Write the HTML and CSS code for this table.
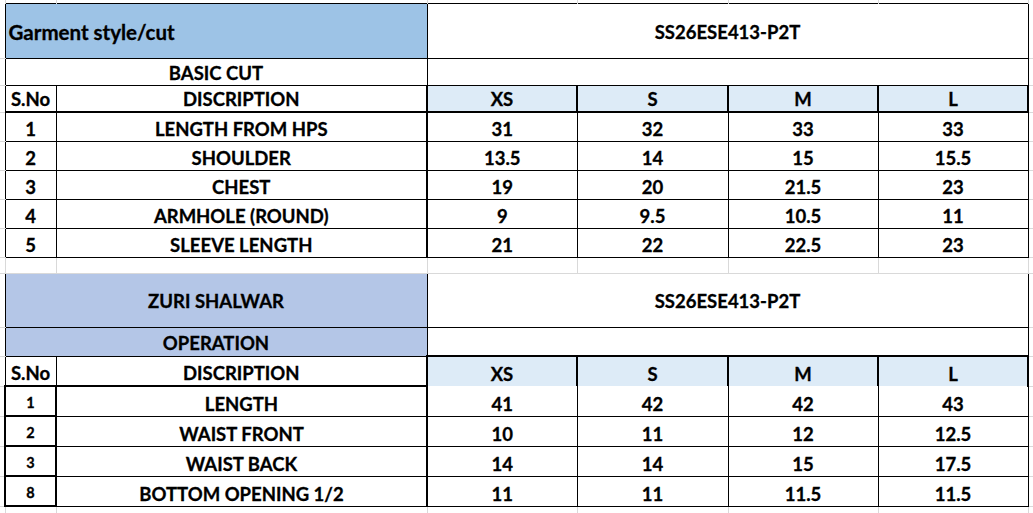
FILE: index.html
```html
<!DOCTYPE html>
<html>
<head>
<meta charset="utf-8">
<title>Size chart</title>
<link rel="stylesheet" href="styles.css">
</head>
<body>
<table class="sheet">
  <colgroup>
    <col class="w0"><col class="w1"><col class="w2"><col class="w3"><col class="w4"><col class="w5"><col class="w6"><col class="w7">
  </colgroup>
  <tbody>
    <tr class="h3">
      <td class="g gr"></td><td class="g gr"></td><td class="g gr"></td><td class="g gr"></td><td class="g gr"></td><td class="g gr"></td><td class="g gr"></td><td class="g gr"></td>
    </tr>
    <tr class="h55">
      <td class="g gb"></td>
      <td colspan="2" class="title blue1">Garment style/cut</td>
      <td colspan="4" class="mid">SS26ESE413-P2T</td>
      <td class="g gb gr"></td>
    </tr>
    <tr class="h27">
      <td class="g gb"></td>
      <td colspan="2">BASIC CUT</td>
      <td colspan="4"></td>
      <td class="g gb gr"></td>
    </tr>
    <tr class="h27">
      <td class="g gb"></td>
      <td class="bb">S.No</td>
      <td class="bb">DISCRIPTION</td>
      <td class="hd">XS</td>
      <td class="hd">S</td>
      <td class="hd">M</td>
      <td class="hd">L</td>
      <td class="g gb gr"></td>
    </tr>
    <tr class="h29">
      <td class="g gb"></td><td>1</td><td class="desc">LENGTH FROM HPS</td><td>31</td><td>32</td><td>33</td><td>33</td><td class="g gb gr"></td>
    </tr>
    <tr class="h29">
      <td class="g gb"></td><td>2</td><td class="desc">SHOULDER</td><td>13.5</td><td>14</td><td>15</td><td>15.5</td><td class="g gb gr"></td>
    </tr>
    <tr class="h29">
      <td class="g gb"></td><td>3</td><td class="desc">CHEST</td><td>19</td><td>20</td><td>21.5</td><td>23</td><td class="g gb gr"></td>
    </tr>
    <tr class="h29">
      <td class="g gb"></td><td>4</td><td class="desc">ARMHOLE (ROUND)</td><td>9</td><td>9.5</td><td>10.5</td><td>11</td><td class="g gb gr"></td>
    </tr>
    <tr class="h29">
      <td class="g gb"></td><td>5</td><td class="desc">SLEEVE LENGTH</td><td>21</td><td>22</td><td>22.5</td><td>23</td><td class="g gb gr"></td>
    </tr>
    <tr class="h16">
      <td class="g gr gb"></td><td class="g gr gb"></td><td class="g gr gb"></td><td class="g gr gb"></td><td class="g gr gb"></td><td class="g gr gb"></td><td class="g gr gb"></td><td class="g gr gb"></td>
    </tr>
    <tr class="h54">
      <td class="g gb"></td>
      <td colspan="2" class="mid blue2">ZURI SHALWAR</td>
      <td colspan="4" class="mid">SS26ESE413-P2T</td>
      <td class="g gb gr"></td>
    </tr>
    <tr class="h29">
      <td class="g gb"></td>
      <td colspan="2" class="blue2 up">OPERATION</td>
      <td colspan="4"></td>
      <td class="g gb gr"></td>
    </tr>
    <tr class="h30">
      <td class="g gb"></td>
      <td class="bb">S.No</td>
      <td class="bb">DISCRIPTION</td>
      <td class="hd hd2">XS</td>
      <td class="hd hd2">S</td>
      <td class="hd hd2">M</td>
      <td class="hd hd2">L</td>
      <td class="g gb gr"></td>
    </tr>
    <tr class="h30">
      <td class="g gb"></td><td class="sn">1</td><td class="desc">LENGTH</td><td class="nt">41</td><td class="nt">42</td><td class="nt">42</td><td class="nt">43</td><td class="g gb gr"></td>
    </tr>
    <tr class="h30">
      <td class="g gb"></td><td class="sn">2</td><td class="desc">WAIST FRONT</td><td>10</td><td>11</td><td>12</td><td>12.5</td><td class="g gb gr"></td>
    </tr>
    <tr class="h30">
      <td class="g gb"></td><td class="sn">3</td><td class="desc">WAIST BACK</td><td>14</td><td>14</td><td>15</td><td>17.5</td><td class="g gb gr"></td>
    </tr>
    <tr class="h30">
      <td class="g gb"></td><td class="sn">8</td><td class="desc">BOTTOM OPENING 1/2</td><td>11</td><td>11</td><td>11.5</td><td>11.5</td><td class="g gb gr"></td>
    </tr>
    <tr class="h7">
      <td class="g gr"></td><td class="g gr"></td><td class="g gr"></td><td class="g gr"></td><td class="g gr"></td><td class="g gr"></td><td class="g gr"></td><td class="g gr"></td>
    </tr>
  </tbody>
</table>
</body>
</html>
```

FILE: styles.css
```css
html, body {
  margin: 0;
  padding: 0;
  background: #ffffff;
}

.sheet {
  border-collapse: collapse;
  table-layout: fixed;
  width: 1033px;
  font-family: Lato, "Liberation Sans", sans-serif;
  font-weight: 700;
  font-size: 18.5px;
  color: #000000;
  -webkit-text-stroke: 0.3px #000000;
}

.w0 { width: 5px; }
.w1 { width: 51px; }
.w2 { width: 371px; }
.w3 { width: 150px; }
.w4 { width: 151px; }
.w5 { width: 150px; }
.w6 { width: 150px; }
.w7 { width: 5px; }

.h3 { height: 3px; }
.h7 { height: 7px; }
.h16 { height: 16px; }
.h27 { height: 27px; }
.h29 { height: 29px; }
.h30 { height: 30px; }
.h54 { height: 54px; }
.h55 { height: 55px; }

td {
  padding: 0 0 3px 0;
  line-height: 18px;
  text-align: center;
  vertical-align: bottom;
  border: 1px solid #000000;
  white-space: nowrap;
  overflow: hidden;
}

td.g {
  border: none;
  padding: 0;
}
td.gr { border-right: 1px solid #d9d9d9; }
td.gb { border-bottom: 1px solid #d9d9d9; }

td.title {
  text-align: left;
  padding: 2px 0 0 3px;
  vertical-align: middle;
  font-size: 20.5px;
}

td.mid {
  padding: 2px 0 0 0;
  vertical-align: middle;
}

td.up { padding-bottom: 4px; }

.blue1 { background: #9dc3e6; }
.blue2 { background: #b4c6e7; }

td.hd {
  background: #ddebf7;
  border-left: 2px solid #000000;
  border-right: 2px solid #000000;
  border-bottom: 2px solid #000000;
}
td.hd2 {
  border-top: 2px solid #000000;
  border-bottom: none;
}

td.bb { border-bottom: 2px solid #000000; }

td.desc { border-right: 2px solid #000000; }

td.sn {
  border: 2px solid #000000;
  font-size: 14.5px;
}

td.nt { border-top: none; }
```
